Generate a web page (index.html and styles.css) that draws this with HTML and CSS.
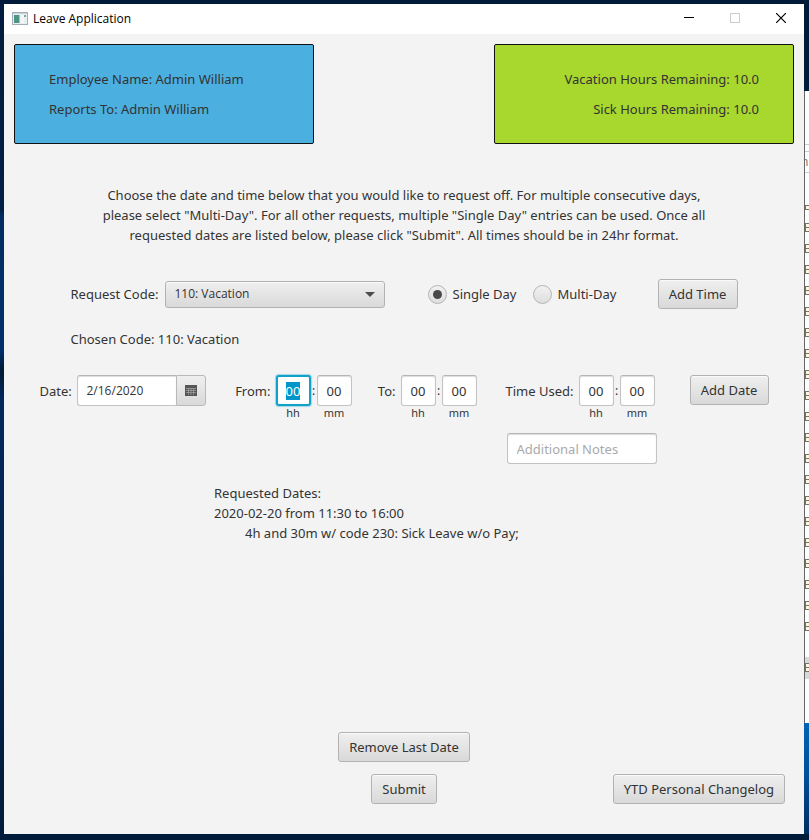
FILE: index.html
```html
<!DOCTYPE html>
<html lang="en">
<head>
<meta charset="utf-8">
<meta name="viewport" content="width=device-width, initial-scale=1">
<title>Leave Application</title>
<link rel="stylesheet" href="styles.css">
</head>
<body>
<div class="desktop">
  <main class="window">
    <header class="titlebar">
      <svg class="app-icon" width="16" height="14" viewBox="0 0 16 14" aria-hidden="true">
        <rect x="0.5" y="0.5" width="15" height="12" fill="#e9eef0" stroke="#a3adb5"/>
        <rect x="1" y="1" width="14" height="1" fill="#c9d3da"/>
        <rect x="2" y="3" width="5" height="8" fill="#4f9585"/>
        <rect x="7" y="3" width="1" height="8" fill="#a9c6c2"/>
        <rect x="9" y="3" width="3" height="8" fill="#f5f6f6"/>
        <rect x="12" y="3" width="2" height="2" fill="#79a99d"/>
      </svg>
      <h1 class="title">Leave Application</h1>
      <div class="window-controls">
        <button class="control" type="button" aria-label="Minimize">
          <svg width="10" height="10" viewBox="0 0 10 10"><path d="M0 4.5H10" stroke="#000"/></svg>
        </button>
        <button class="control" type="button" aria-label="Maximize" disabled>
          <svg width="10" height="10" viewBox="0 0 10 10"><rect x="0.5" y="0.5" width="9" height="9" fill="none" stroke="#ccc"/></svg>
        </button>
        <button class="control" type="button" aria-label="Close">
          <svg width="10" height="10" viewBox="0 0 10 10"><path d="M0 0L10 10M10 0L0 10" stroke="#000" stroke-width="1.2"/></svg>
        </button>
      </div>
    </header>

    <form class="content">
      <div class="cards">
        <section class="card card-employee">
          <p>Employee Name: Admin William</p>
          <p>Reports To: Admin William</p>
        </section>
        <section class="card card-hours">
          <p>Vacation Hours Remaining: 10.0</p>
          <p>Sick Hours Remaining: 10.0</p>
        </section>
      </div>

      <p class="instructions">Choose the date and time below that you would like to request off. For multiple consecutive days,<br>
        please select "Multi-Day". For all other requests, multiple "Single Day" entries can be used. Once all<br>
        requested dates are listed below, please click "Submit". All times should be in 24hr format.</p>

      <div class="code-row">
        <label class="code-label" for="code">Request Code:</label>
        <div class="select-box">
          <select id="code"><option>110: Vacation</option><option>230: Sick Leave w/o Pay</option></select>
        </div>
        <div class="modes">
          <label class="mode"><input type="radio" name="mode" checked>Single Day</label>
          <label class="mode"><input type="radio" name="mode">Multi-Day</label>
        </div>
        <button class="button" type="button">Add Time</button>
        <p class="chosen">Chosen Code: 110: Vacation</p>
      </div>

      <div class="entry-row">
        <div class="date-field">
          <label class="date-label" for="date">Date:</label>
          <div class="picker">
            <input id="date" type="text" value="2/16/2020">
            <button type="button" aria-label="Open calendar">
              <svg width="12" height="11" viewBox="0 0 12 11">
                <rect width="12" height="11" fill="#565656"/>
                <path d="M1 3.5H11M1 5.5H11M1 7.5H11M3.5 3V10M6 3V10M8.5 3V10" stroke="#a6a6a6" stroke-width="0.7" fill="none"/>
              </svg>
            </button>
          </div>
        </div>
        <fieldset class="time">
          <span class="time-label">From:</span>
          <input id="from-h" type="text" value="00"><span class="colon">:</span><input id="from-m" type="text" value="00">
          <label class="unit unit-h" for="from-h">hh</label><label class="unit unit-m" for="from-m">mm</label>
        </fieldset>
        <fieldset class="time">
          <span class="time-label">To:</span>
          <input id="to-h" type="text" value="00"><span class="colon">:</span><input id="to-m" type="text" value="00">
          <label class="unit unit-h" for="to-h">hh</label><label class="unit unit-m" for="to-m">mm</label>
        </fieldset>
        <fieldset class="time">
          <span class="time-label">Time Used:</span>
          <input id="used-h" type="text" value="00"><span class="colon">:</span><input id="used-m" type="text" value="00">
          <label class="unit unit-h" for="used-h">hh</label><label class="unit unit-m" for="used-m">mm</label>
        </fieldset>
        <button class="button add-date" type="button">Add Date</button>
        <input class="notes" type="text" placeholder="Additional Notes" aria-label="Additional Notes">
      </div>

      <section class="requested">
        <p>Requested Dates:</p>
        <p>2020-02-20 from 11:30 to 16:00</p>
        <p class="detail">4h and 30m w/ code 230: Sick Leave w/o Pay;</p>
      </section>

      <footer class="actions">
        <button class="button remove" type="button">Remove Last Date</button>
        <button class="button submit" type="button">Submit</button>
        <button class="button changelog" type="button">YTD Personal Changelog</button>
      </footer>
    </form>
  </main>

  <aside class="behind" aria-hidden="true">
    <div class="sheet">
      <div class="sheet-head"></div>
      <div class="sheet-tab"></div>
      <div class="sheet-columns"><span>n</span></div>
      <i class="file file-partial"></i>
      <ul class="files" id="files"></ul>
      <div class="file-selected"><i class="file"></i></div>
    </div>
  </aside>
</div>
<script src="script.js"></script>
</body>
</html>
```
FILE: styles.css
```css
* { box-sizing: border-box; }

body {
  margin: 0;
  font: 13px/20px "Noto Sans", "Open Sans", sans-serif;
  color: #333;
}

p, h1, ul, fieldset { margin: 0; padding: 0; border: 0; min-width: 0; }
button, input, select { font: inherit; color: inherit; margin: 0; }

.desktop {
  display: grid;
  grid-template-columns: minmax(0, 1fr) 5px;
  min-height: 100vh;
  padding: 4px 0 6px 4px;
  background:
    linear-gradient(90deg, transparent 4px, #001a3a 4px),
    linear-gradient(180deg, #001b3d 0, #001f47 210px, #002c62 215px, #00306a 350px, #001937 370px, #00285a 400px, #002550 600px, #001a3a 100%);
}

.window { display: flex; flex-direction: column; background: #f3f3f3; }

.titlebar { display: flex; align-items: center; height: 30px; padding-left: 8px; background: #fff; }
.app-icon { margin-right: 5px; }
.title { flex: 1; font-family: "Open Sans", sans-serif; font-size: 12px; font-weight: 400; color: #000; }
.window-controls { display: flex; }
.control {
  display: grid;
  place-items: center;
  width: 46px;
  height: 30px;
  padding: 0 0 2px;
  border: 0;
  background: none;
}

.content { flex: 1; display: flex; flex-direction: column; padding: 10px 10px 30px; }

.cards { display: flex; justify-content: space-between; }
.card {
  display: flex;
  flex-direction: column;
  gap: 10px;
  width: 300px;
  padding: 24px 34px;
  border: 1px solid #111;
  border-radius: 2px;
}
.card-employee { background: #4bafdf; }
.card-hours { background: #a8d72e; text-align: right; }

.instructions { margin-top: 41px; text-align: center; }

.button {
  height: 30px;
  padding: 0 9px;
  border: 1px solid #b2b2b2;
  border-radius: 3px;
  background: linear-gradient(#efefef, #d9d9d9);
  box-shadow: inset 0 1px #fafafa;
  white-space: nowrap;
}

.code-row {
  display: grid;
  grid-template-columns: 94px 220px 273px 80px;
  row-gap: 20px;
  align-items: center;
  justify-content: center;
  margin-top: 34px;
}
.code-label, .date-label { white-space: nowrap; }

.select-box { position: relative; }
.select-box::after {
  content: "";
  position: absolute;
  top: 11px;
  right: 10px;
  border: 5px solid transparent;
  border-top-color: #4c4c4c;
  border-bottom: 0;
  pointer-events: none;
}
select {
  appearance: none;
  display: block;
  width: 100%;
  height: 27px;
  padding: 0 9px;
  border: 1px solid #b2b2b2;
  border-radius: 3px;
  background: linear-gradient(#efefef, #d9d9d9);
  box-shadow: inset 0 1px #fafafa;
  font-family: "Open Sans", sans-serif;
  font-size: 12px;
}
.modes { display: grid; grid-template-columns: 105px 1fr; padding-left: 43px; }
.mode { display: flex; align-items: center; gap: 6px; white-space: nowrap; }
.mode input {
  appearance: none;
  display: grid;
  place-items: center;
  width: 19px;
  height: 19px;
  border: 1px solid #b5b5b5;
  border-radius: 50%;
  background: linear-gradient(#f1f1f1, #dedede);
}
.mode input:checked::before {
  content: "";
  width: 9px;
  height: 9px;
  border-radius: 50%;
  background: #4a4a4a;
}
.chosen { grid-column: 1 / -1; }

.entry-row {
  display: grid;
  grid-template-columns: 166px 121px 100px 153px 89px;
  column-gap: 25px;
  align-items: start;
  justify-content: center;
  margin-top: 26px;
}

input[type="text"] {
  height: 31px;
  border: 1px solid #c3c3c3;
  border-top-color: #b5b5b5;
  border-radius: 3px;
  background: #fff;
  box-shadow: inset 0 1px 1px #ddd;
  outline: 0;
}

.date-field { display: grid; grid-template-columns: 37px 129px; align-items: center; }
.picker { display: grid; grid-template-columns: 99px 30px; }
.picker input[type="text"] {
  width: 99px;
  padding: 0 9px;
  border-right: 0;
  border-radius: 3px 0 0 3px;
  font-family: "Open Sans", sans-serif;
  font-size: 12px;
}
.picker button {
  display: grid;
  place-items: center;
  padding: 0;
  border: 1px solid #b9b9b9;
  border-radius: 0 3px 3px 0;
  background: linear-gradient(#efefef, #d9d9d9);
}

.time {
  display: grid;
  grid-template-columns: 1fr 35px 6px 35px;
  align-items: center;
}
.time-label { padding-right: 5px; text-align: right; white-space: nowrap; }
.time input[type="text"] { width: 35px; padding: 0; text-align: center; }
.time input[type="text"]:focus {
  border: 2px solid #12a1c9;
  box-shadow: 0 0 1px 1px #9fd6e6;
}
::selection { background: #0096c9; color: #fff; }
.colon { text-align: center; font-size: 12px; }
.unit { grid-row: 2; font-size: 11px; line-height: 14px; text-align: center; }
.unit-h { grid-column: 2; }
.unit-m { grid-column: 4; }

.add-date { justify-self: end; width: 79px; }
.notes { grid-column: 4; width: 150px; margin: 13px 0 0 5px; padding: 0 9px; }
.notes::placeholder { color: #aaa; opacity: 1; }

.requested { width: 380px; margin: 19px auto 0; }
.detail { padding-left: 31px; }

.actions {
  display: grid;
  grid-template-columns: 1fr auto 1fr;
  row-gap: 12px;
  margin-top: auto;
  padding-right: 9px;
  padding-left: 9px;
}
.actions .button { padding: 0 10px; }
.remove { grid-column: 2; }
.submit { grid-column: 2; justify-self: center; }
.changelog { grid-column: 3; justify-self: end; }

.behind {
  display: flex;
  flex-direction: column;
  padding-top: 87px;
  background: linear-gradient(#001a3a 110px, #0063b4 719px, #00509a 770px, #002d5f 100%);
}
.sheet { height: 632px; overflow: hidden; border-left: 1px solid #666; background: #fff; }
.sheet-head { height: 54px; border-bottom: 1px solid #ccc; }
.sheet-tab { height: 7px; border-bottom: 1px solid #ccc; }
.sheet-columns { height: 21px; overflow: hidden; border-bottom: 1px solid #ccc; font-size: 12px; }
.sheet-columns span { display: block; margin-left: -4px; color: #777; }
.files { display: grid; padding-top: 12px; list-style: none; }
.files li { height: 21px; padding-top: 1px; }
.file {
  display: block;
  width: 8px;
  height: 9px;
  border: 1px solid #7c7065;
  background: linear-gradient(#fff7df 3px, #7c7065 3px, #7c7065 4px, #fff7df 4px);
}
.file-partial { height: 5px; margin-top: 32px; }
.file-selected { height: 22px; margin-top: 15px; padding-top: 6px; background: #d8d8d8; }
```
FILE: script.js
```js
const files = document.getElementById("files");
for (let i = 0; i < 20; i += 1) {
  const row = document.createElement("li");
  const icon = document.createElement("i");
  icon.className = "file";
  row.append(icon);
  files.append(row);
}

const firstHour = document.getElementById("from-h");
firstHour.focus();
firstHour.select();
```
